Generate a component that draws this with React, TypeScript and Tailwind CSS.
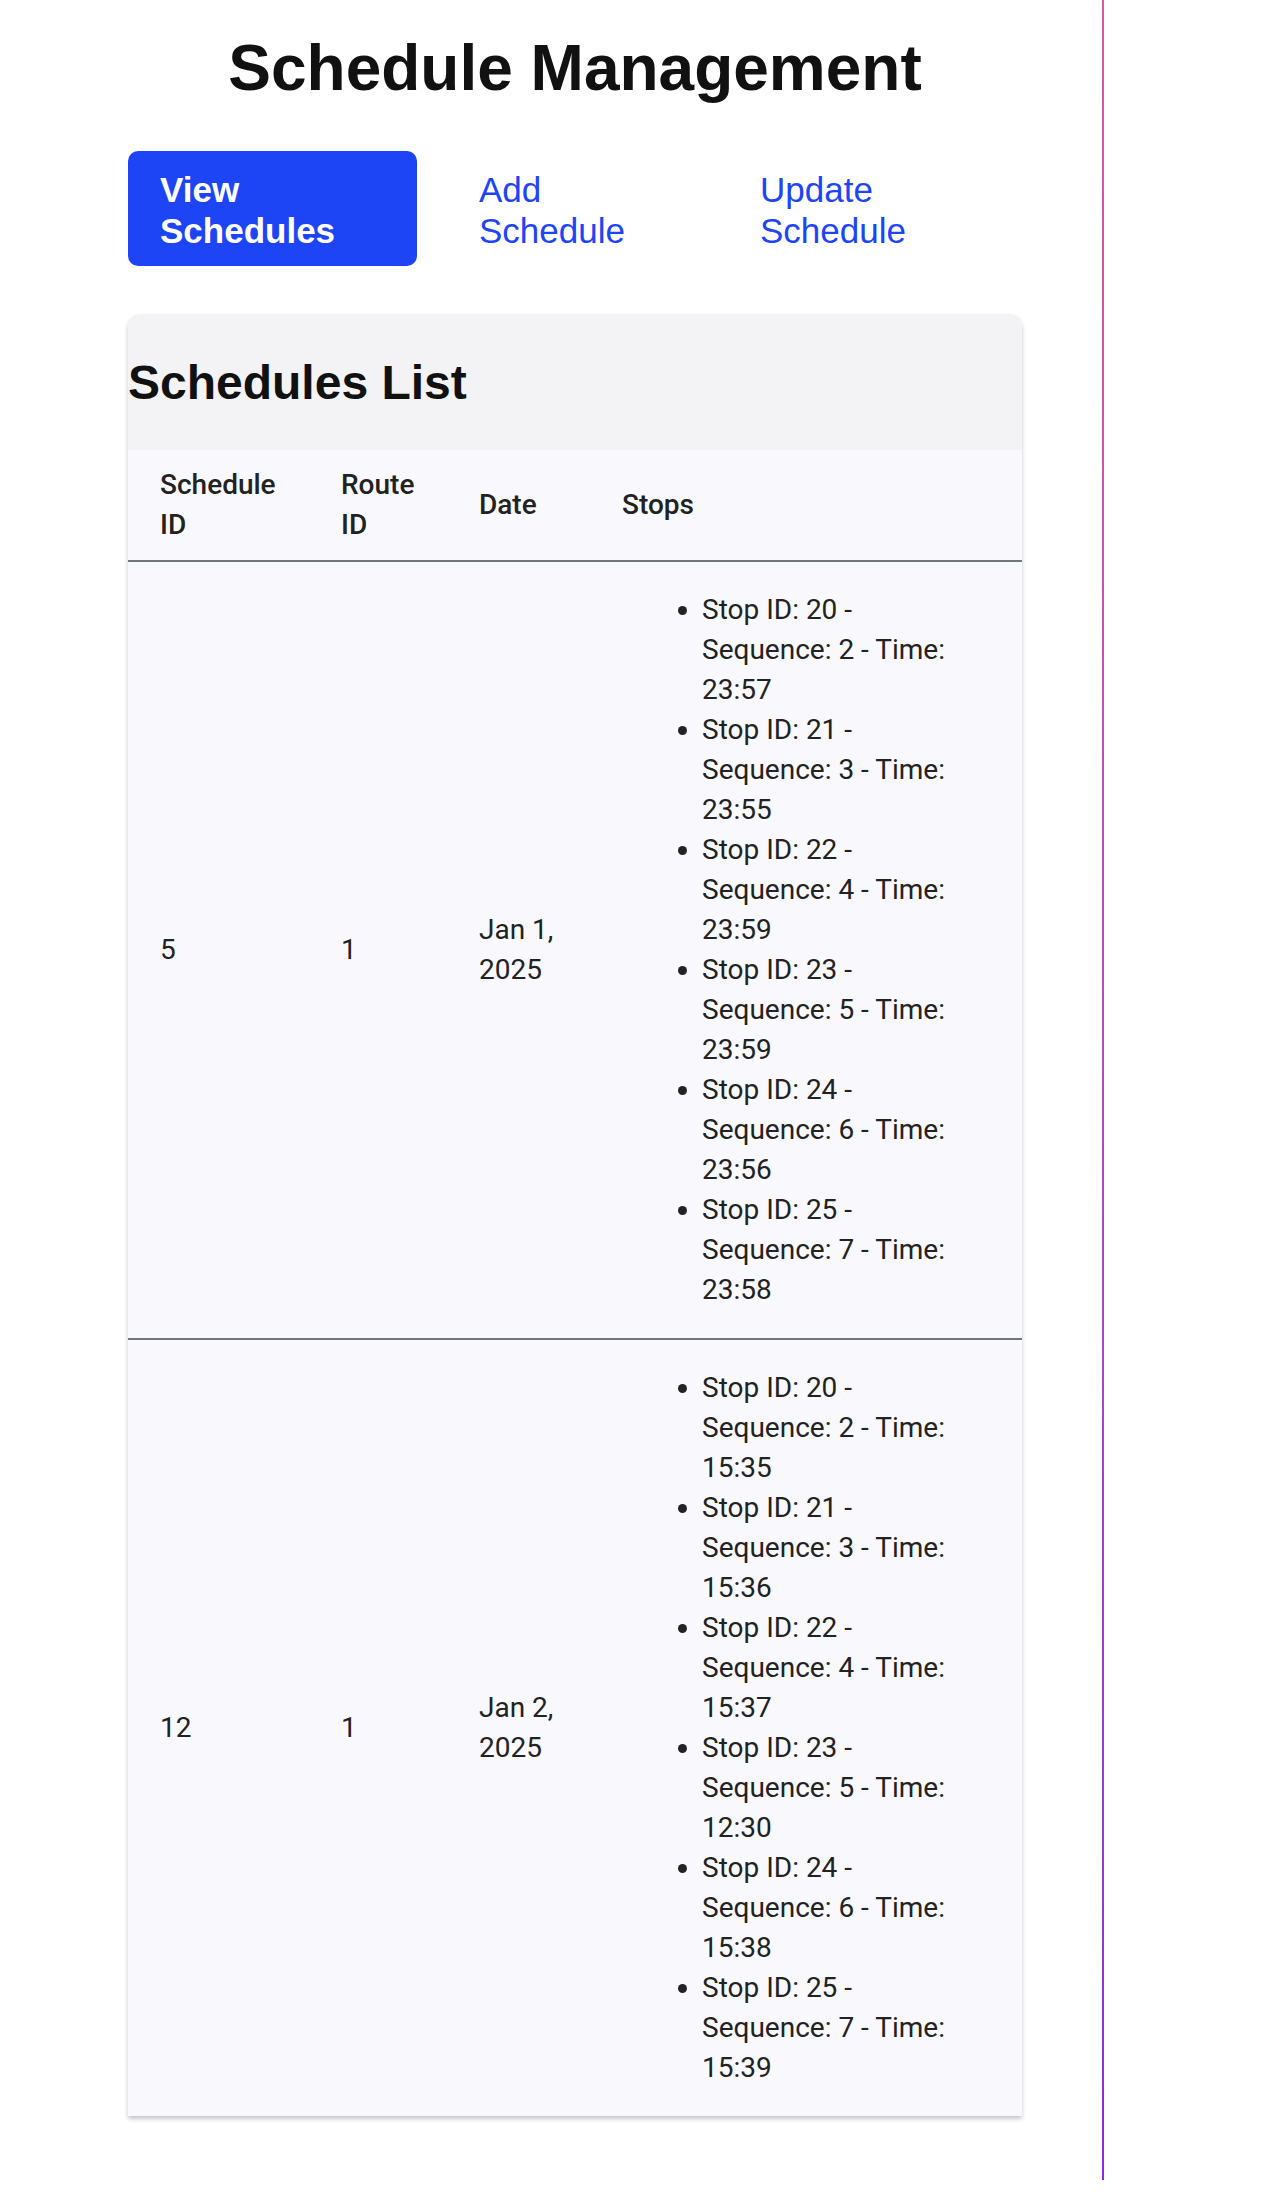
const SCHEDULES = [
  {
    id: 5,
    routeId: 1,
    date: 'Jan 1, 2025',
    stops: [
      { stopId: 20, seq: 2, time: '23:57' },
      { stopId: 21, seq: 3, time: '23:55' },
      { stopId: 22, seq: 4, time: '23:59' },
      { stopId: 23, seq: 5, time: '23:59' },
      { stopId: 24, seq: 6, time: '23:56' },
      { stopId: 25, seq: 7, time: '23:58' },
    ],
  },
  {
    id: 12,
    routeId: 1,
    date: 'Jan 2, 2025',
    stops: [
      { stopId: 20, seq: 2, time: '15:35' },
      { stopId: 21, seq: 3, time: '15:36' },
      { stopId: 22, seq: 4, time: '15:37' },
      { stopId: 23, seq: 5, time: '12:30' },
      { stopId: 24, seq: 6, time: '15:38' },
      { stopId: 25, seq: 7, time: '15:39' },
    ],
  },
]

const sans = { fontFamily: '"Liberation Sans", Arial, sans-serif' }
const roboto = { fontFamily: 'Roboto, "Noto Sans", sans-serif' }

function Nav() {
  return (
    <nav className="flex gap-[30px] mt-[47px] text-[35px] leading-[41px]" style={sans}>
      <a className="w-[289px] px-[32px] pt-[17.5px] pb-[15.5px] rounded-[10px] bg-[#1e45f5] text-white font-bold">
        View Schedules
      </a>
      <a className="w-[251px] px-[32px] pt-[17.5px] pb-[15.5px] text-[#1e45f5]">Add Schedule</a>
      <a className="w-[248px] px-[32px] pt-[17.5px] pb-[15.5px] text-[#1e45f5]">Update Schedule</a>
    </nav>
  )
}

function SchedulesTable() {
  return (
    <div className="mt-[48px] rounded-t-[12px] shadow-[0_3px_4px_rgba(0,0,0,0.22)]">
      <div className="bg-[#f3f3f5] rounded-t-[12px] py-[40.5px]">
        <h2 className="text-[48px] leading-[55px] font-bold text-[#111]" style={sans}>
          Schedules List
        </h2>
      </div>
      <table className="w-full table-fixed border-collapse bg-[#f9f9fd] text-[28px] leading-[40px] text-[#222]" style={roboto}>
        <colgroup>
          <col className="w-[181px]" />
          <col className="w-[138px]" />
          <col className="w-[143px]" />
          <col />
        </colgroup>
        <thead>
          <tr className="border-b-2 border-[#71757d]">
            <th className="px-[32px] py-[15px] text-left font-medium align-middle">Schedule ID</th>
            <th className="px-[32px] py-[15px] text-left font-medium align-middle">Route ID</th>
            <th className="px-[32px] py-[15px] text-left font-medium align-middle">Date</th>
            <th className="px-[32px] py-[15px] text-left font-medium align-middle">Stops</th>
          </tr>
        </thead>
        <tbody>
          {SCHEDULES.map((s, i) => (
            <tr key={s.id} className={i < SCHEDULES.length - 1 ? 'border-b-2 border-[#71757d]' : ''}>
              <td className="px-[32px] align-middle">{s.id}</td>
              <td className="px-[32px] align-middle">{s.routeId}</td>
              <td className="px-[32px] align-middle">{s.date}</td>
              <td className="px-[32px] align-middle">
                <ul className="list-disc list-outside pl-[80px] my-[28px]">
                  {s.stops.map((st) => (
                    <li key={st.stopId} className="max-w-[270px]">
                      Stop ID: {st.stopId} - Sequence: {st.seq} - Time: {st.time}
                    </li>
                  ))}
                </ul>
              </td>
            </tr>
          ))}
        </tbody>
      </table>
    </div>
  )
}

export default function App() {
  return (
    <div className="min-h-[2208px] bg-white flex items-start">
      <div className="flex">
        <main className="w-[1102px] pl-[128px] pb-[64px]">
          <div className="w-[894px]">
            <h1 className="mt-[32px] text-center text-[64px] leading-[72px] font-bold text-[#111]" style={sans}>
              Schedule Management
            </h1>
            <Nav />
            <SchedulesTable />
          </div>
        </main>
        <div className="w-[2px] bg-gradient-to-b from-[#e1559b] to-[#8a2be2]" />
      </div>
    </div>
  )
}
